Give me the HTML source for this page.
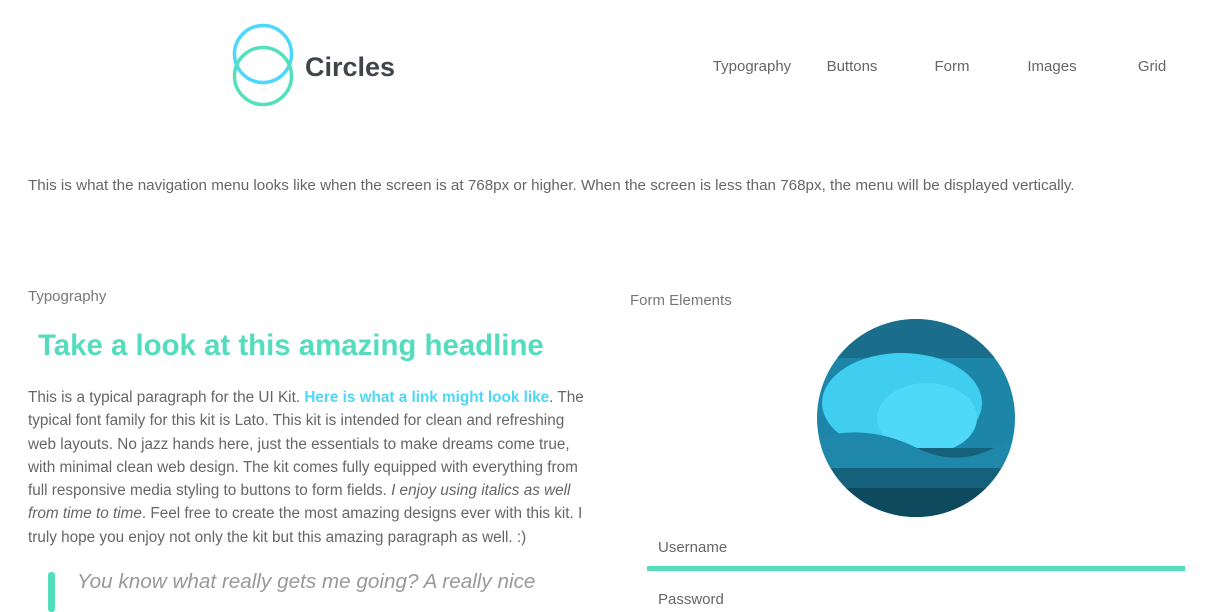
<!DOCTYPE html>
<html><head><meta charset="utf-8"><style>
body{margin:0;width:1219px;height:602px;overflow:hidden;background:#fff;font-family:"Liberation Sans",sans-serif;color:#666;position:relative}
.a{position:absolute;white-space:nowrap}
.nav{position:absolute;top:58px;width:100px;text-align:center;font-size:15px;color:#666}
</style></head><body>
<svg class="a" style="left:230px;top:22px" width="66" height="86">
<circle cx="33" cy="32" r="28.5" fill="none" stroke="#4dd8fb" stroke-width="3.5"/>
<circle cx="33" cy="54" r="28.5" fill="none" stroke="#52e0bd" stroke-width="3.5"/>
</svg>
<div class="a" style="left:305px;top:52px;font-size:27px;font-weight:bold;color:#3f454b">Circles</div>
<div class="nav" style="left:702px">Typography</div>
<div class="nav" style="left:802px">Buttons</div>
<div class="nav" style="left:902px">Form</div>
<div class="nav" style="left:1002px">Images</div>
<div class="nav" style="left:1102px">Grid</div>
<div class="a" style="left:28px;top:177px;font-size:15.2px">This is what the navigation menu looks like when the screen is at 768px or higher. When the screen is less than 768px, the menu will be displayed vertically.</div>
<div class="a" style="left:28px;top:288px;font-size:15px;color:#777">Typography</div>
<div class="a" style="left:38px;top:329px;font-size:29.4px;font-weight:bold;color:#53ddbd">Take a look at this amazing headline</div>
<div class="a" style="left:28px;top:386px;font-size:15.3px;line-height:23.3px;color:#666">
This is a typical paragraph for the UI Kit. <span style="color:#4dd7f9;font-weight:bold">Here is what a link might look like</span>. The<br>
typical font family for this kit is Lato. This kit is intended for clean and refreshing<br>
web layouts. No jazz hands here, just the essentials to make dreams come true,<br>
with minimal clean web design. The kit comes fully equipped with everything from<br>
full responsive media styling to buttons to form fields. <i>I enjoy using italics as well</i><br>
<i>from time to time</i>. Feel free to create the most amazing designs ever with this kit. I<br>
truly hope you enjoy not only the kit but this amazing paragraph as well. :)</div>
<div class="a" style="left:48px;top:572px;width:7px;height:40px;background:#53ddbd;border-radius:3px"></div>
<div class="a" style="left:77px;top:570px;font-size:20.7px;font-style:italic;color:#999">You know what really gets me going? A really nice</div>
<div class="a" style="left:630px;top:292px;font-size:15px;color:#777">Form Elements</div>
<svg class="a" style="left:817px;top:318px" width="200" height="200">
<defs>
<clipPath id="c"><circle cx="99" cy="100" r="99"/></clipPath>
</defs>
<g clip-path="url(#c)">
<rect width="200" height="200" fill="#1d86a8"/>
<rect width="200" height="40" fill="#1a6e8c"/>
<ellipse cx="85" cy="85" rx="80" ry="50" fill="#3fcdf0"/>
<ellipse cx="110" cy="100" rx="50" ry="35" fill="#4fd8f8"/>
<rect y="130" width="200" height="70" fill="#15607a"/>
<path d="M0 120 Q50 105 100 130 T200 115 V150 H0Z" fill="#1f88aa"/>
<rect y="170" width="200" height="30" fill="#0e4a5e"/>
</g>
</svg>
<div class="a" style="left:658px;top:539px;font-size:15px;color:#666">Username</div>
<div class="a" style="left:647px;top:566px;width:538px;height:5px;background:#53ddbd"></div>
<div class="a" style="left:658px;top:591px;font-size:15px;color:#666">Password</div>
</body></html>
